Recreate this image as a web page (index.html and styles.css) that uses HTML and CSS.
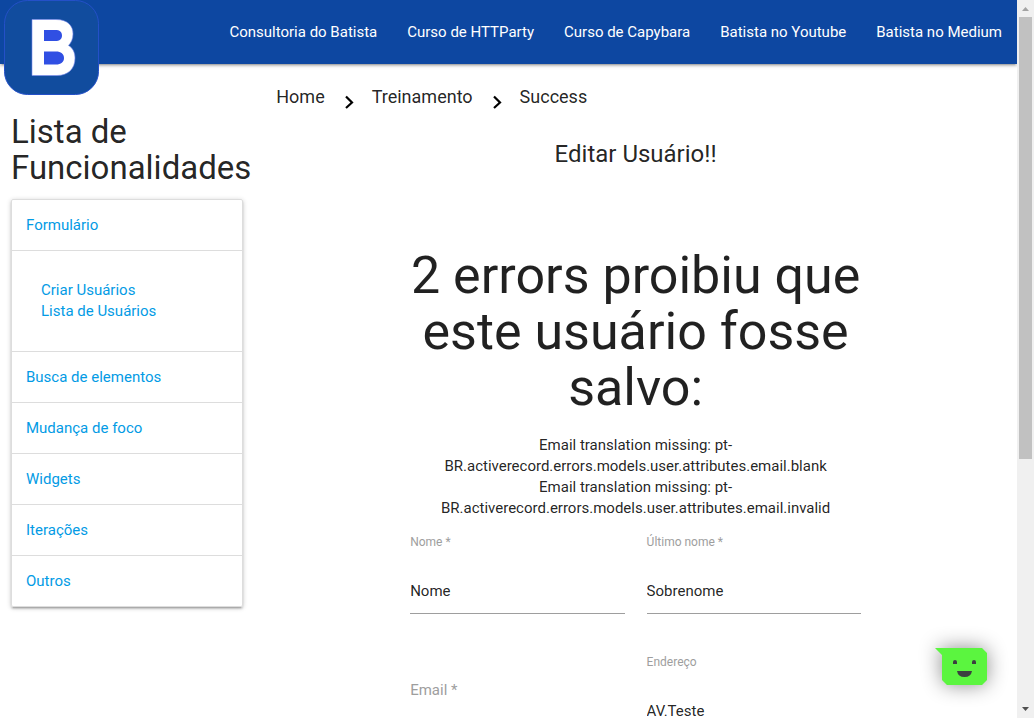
FILE: index.html
```html
<!DOCTYPE html>
<html lang="pt-BR">
<head>
<meta charset="utf-8">
<title>Editar Usuário</title>
<link rel="stylesheet" href="styles.css">
</head>
<body>
<div class="window">
  <div class="page">
    <header class="nav">
      <a class="brand" href="#" aria-label="Batista">
        <svg class="brand-logo" viewBox="0 0 95 95" aria-hidden="true">
          <rect x="0.5" y="0.5" width="94" height="94" rx="23" fill="#114c9e" stroke="#2450c8"/>
          <path d="M28 19.500H52C64 19.500 69 26 69 34C69 39 67 43 64.500 45.500C69 48 71 53 71 58C71 69 64 75.500 53 75.500H28Z" fill="#fff" stroke="#7c8cf0" stroke-width=".6"/>
          <path d="M40 30H51C56 30 58 32 58 35.500C58 39 56 41 51 41H40ZM40 51.500H52C57 51.500 60 54 60 58C60 62 57 64.500 52 64.500H40Z" fill="#304fe3"/>
        </svg>
      </a>
      <nav class="nav-links">
        <a href="#">Consultoria do Batista</a>
        <a href="#">Curso de HTTParty</a>
        <a href="#">Curso de Capybara</a>
        <a href="#">Batista no Youtube</a>
        <a href="#">Batista no Medium</a>
      </nav>
    </header>
    <div class="layout">
      <aside class="sidebar">
        <h4 class="sidebar-title">Lista de Funcionalidades</h4>
        <ul class="menu">
          <li class="menu-item"><a href="#">Formulário</a></li>
          <li class="menu-item menu-sub"><a href="#">Criar Usuários</a><a href="#">Lista de Usuários</a></li>
          <li class="menu-item"><a href="#">Busca de elementos</a></li>
          <li class="menu-item"><a href="#">Mudança de foco</a></li>
          <li class="menu-item"><a href="#">Widgets</a></li>
          <li class="menu-item"><a href="#">Iterações</a></li>
          <li class="menu-item"><a href="#">Outros</a></li>
        </ul>
      </aside>
      <main class="content">
        <nav class="crumbs">
          <a href="#">Home</a>
          <svg class="chevron" viewBox="0 0 11 14" aria-hidden="true"><path d="M2 1.500L8 7.500L2 13" fill="none" stroke="#000" stroke-width="2.200"/></svg>
          <a href="#">Treinamento</a>
          <svg class="chevron" viewBox="0 0 11 14" aria-hidden="true"><path d="M2 1.500L8 7.500L2 13" fill="none" stroke="#000" stroke-width="2.200"/></svg>
          <a href="#">Success</a>
        </nav>
        <h5 class="page-title">Editar Usuário!!</h5>
        <form class="user-form">
          <h2 class="error-title">2 errors proibiu que este usuário fosse salvo:</h2>
          <ul class="error-list">
            <li>Email translation missing: pt-BR.activerecord.errors.models.user.attributes.email.blank</li>
            <li>Email translation missing: pt-BR.activerecord.errors.models.user.attributes.email.invalid</li>
          </ul>
          <div class="fields">
            <div class="field"><label for="name">Nome *</label><input id="name" type="text" value="Nome"></div>
            <div class="field"><label for="last">Último nome *</label><input id="last" type="text" value="Sobrenome"></div>
            <div class="field field-empty"><label for="email">Email *</label><input id="email" type="text"></div>
            <div class="field"><label for="address">Endereço</label><input id="address" type="text" value="AV.Teste"></div>
          </div>
        </form>
      </main>
    </div>
    <button class="chat" type="button" aria-label="Chat">
      <svg class="chat-icon" viewBox="0 0 52 37" aria-hidden="true">
        <path d="M0 0H47L52 5V32L47 37H12L7 32V7Z" fill="#5bf53f"/>
        <path d="M18 16V14Q18 12 20 12Q22 12 22 14V16ZM37 16V14Q37 12 39 12Q41 12 41 14V16ZM22 23H37Q36 29 29.500 29Q23 29 22 23Z" fill="#3c4040"/>
      </svg>
    </button>
  </div>
  <div class="scrollbar" aria-hidden="true">
    <svg class="arrow" viewBox="0 0 17 17"><path d="M5 11L8.500 7L12 11Z" fill="#a3a3a3"/></svg>
    <div class="track"><div class="thumb"></div></div>
    <svg class="arrow" viewBox="0 0 17 17"><path d="M5 6L8.500 10L12 6Z" fill="#505050"/></svg>
  </div>
</div>
</body>
</html>
```
FILE: styles.css
```css
* { box-sizing: border-box; }
body { margin: 0; font: 15px/21px Roboto, sans-serif; color: rgba(0, 0, 0, .87); background: #fff; }
a { color: #039be5; text-decoration: none; }
h2, h4, h5, ul { margin: 0; padding: 0; font-weight: 400; list-style: none; }
.window { display: flex; height: 100vh; overflow: hidden; }
.page { position: relative; flex: 1; min-width: 0; overflow: hidden; }
.nav { position: relative; display: flex; justify-content: flex-end; height: 64px; background: #0d47a1; box-shadow: 0 2px 2px rgba(0, 0, 0, .14), 0 3px 1px -2px rgba(0, 0, 0, .12), 0 1px 5px rgba(0, 0, 0, .2); }
.brand { position: absolute; left: 4px; top: 0; }
.brand-logo { display: block; width: 95px; height: 95px; }
.nav-links { display: flex; line-height: 64px; }
.nav-links a { padding: 0 15px; color: #fff; white-space: nowrap; }
.layout { display: grid; grid-template-columns: 1fr 3fr; }
.sidebar { min-width: 0; padding: 50px 11px 0; }
.sidebar-title { font-size: 33px; line-height: 36px; }
.menu { margin-top: 13px; border: 1px solid #ddd; border-radius: 2px; box-shadow: 0 2px 2px rgba(0, 0, 0, .14), 0 3px 1px -2px rgba(0, 0, 0, .12), 0 1px 5px rgba(0, 0, 0, .2); }
.menu-item { padding: 15px 14px 14px; border-bottom: 1px solid #ddd; }
.menu-item:last-child { border-bottom: 0; }
.menu-item a { display: block; }
.menu-sub { padding: 29px; }
.content { min-width: 0; }
.crumbs { display: flex; align-items: flex-start; padding: 20px 22px 0; font-size: 18px; line-height: 26px; }
.crumbs a { color: rgba(0, 0, 0, .87); }
.chevron { width: 11px; height: 14px; margin: 11px 17px 0 19px; }
.page-title { margin-top: 30px; font-size: 24px; line-height: 28px; text-align: center; }
.user-form { width: 62%; margin: 80px auto 0; padding: 0 11px; }
.error-title { margin: 0 -11px; font-size: 52px; line-height: 56px; text-align: center; }
.error-list { margin-top: 19px; text-align: center; }
.fields { display: grid; grid-template-columns: 1fr 1fr; gap: 39px 22px; margin-top: 14px; }
.field { display: flex; flex-direction: column; min-width: 0; height: 81px; }
.field label { font-size: 12px; line-height: 18px; color: #9e9e9e; }
.field input { width: 100%; height: 44px; margin: 19px 0 0; padding: 0 0 2px; border: 0; border-bottom: 1px solid #9e9e9e; border-radius: 0; outline: 0; font: inherit; color: inherit; background: transparent; }
.field-empty { justify-content: flex-end; }
.field-empty label { font-size: 15px; line-height: 22px; }
.field-empty input { height: 33px; margin: 0; }
.chat { position: absolute; right: 30px; bottom: 33px; padding: 0; border: 0; background: none; }
.chat-icon { display: block; width: 52px; height: 37px; overflow: visible; filter: drop-shadow(0 0 10px rgba(0, 0, 0, .45)); }
.scrollbar { display: flex; flex-direction: column; width: 17px; background: #f0f0f0; }
.arrow { width: 17px; height: 17px; }
.track { flex: 1; padding: 0 2px; }
.thumb { height: 64.6%; background: #c1c1c1; }
```
